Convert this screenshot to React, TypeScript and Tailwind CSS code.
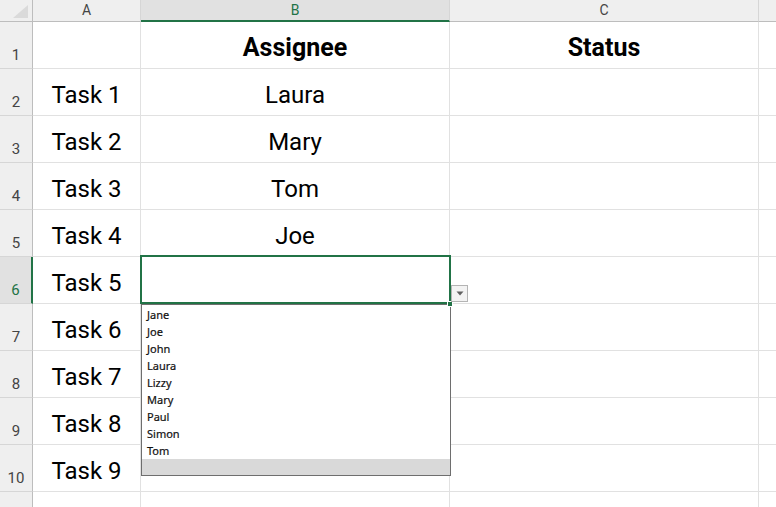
import React from "react";

type Row = { a: string; b: string; c: string; bold?: boolean };

const rows: Row[] = [
  { a: "", b: "Assignee", c: "Status", bold: true },
  { a: "Task 1", b: "Laura", c: "" },
  { a: "Task 2", b: "Mary", c: "" },
  { a: "Task 3", b: "Tom", c: "" },
  { a: "Task 4", b: "Joe", c: "" },
  { a: "Task 5", b: "", c: "" },
  { a: "Task 6", b: "", c: "" },
  { a: "Task 7", b: "", c: "" },
  { a: "Task 8", b: "", c: "" },
  { a: "Task 9", b: "", c: "" },
  { a: "", b: "", c: "" },
];

const names = ["Jane", "Joe", "John", "Laura", "Lizzy", "Mary", "Paul", "Simon", "Tom"];

function Dropdown() {
  return (
    <>
      <div className="absolute -left-px -top-[2px] w-[311px] h-[49px] border-2 border-[#217346] pointer-events-none z-10" />
      <div className="absolute left-[306px] top-[44px] w-[6px] h-[6px] bg-[#217346] border border-white z-20" />
      <div className="absolute left-[310px] top-[28px] w-[17px] h-[17px] border border-[#b4b4b4] bg-[#f3f3f3] flex items-center justify-center z-20">
        <svg width="8" height="5" viewBox="0 0 8 5">
          <polygon points="0.5,0.5 7.5,0.5 4,4.5" fill="#606060" />
        </svg>
      </div>
      <div className="absolute left-0 top-[47px] w-[310px] h-[172px] border border-[#6e6e6e] bg-white z-10 flex flex-col pt-px">
        {names.map((n) => (
          <div
            key={n}
            className="h-[17px] flex items-center pl-[5px] text-[11px] text-[#111] leading-none [-webkit-text-stroke:0.2px_#111]"
            style={{ fontFamily: '"Noto Sans", "Liberation Sans", sans-serif' }}
          >
            {n}
          </div>
        ))}
        <div className="flex-1 bg-[#d9d9d9]" />
      </div>
    </>
  );
}

export default function App() {
  return (
    <div className="w-[776px] h-[507px] overflow-hidden bg-white">
      <div
        className="grid grid-cols-[33px_108px_309px_309px_1fr] grid-rows-[22px_repeat(11,47px)]"
        style={{ fontFamily: 'Roboto, "Liberation Sans", sans-serif' }}
      >
        {/* header row */}
        <div className="bg-[#efefef] border-r border-b border-[#bdbdbd] relative">
          <svg className="absolute left-[13px] top-[5px]" width="15" height="13" viewBox="0 0 15 13">
            <polygon points="15,0 15,13 0,13" fill="#dadada" />
          </svg>
        </div>
        <div className="bg-[#efefef] border-r border-[#d6d6d6] border-b border-b-[#bdbdbd] flex items-center justify-center text-[14px] text-[#444]">
          A
        </div>
        <div className="bg-[#e1e1e1] border-r border-[#d6d6d6] border-b-2 border-b-[#217346] flex items-center justify-center text-[14px] text-[#217346]">
          B
        </div>
        <div className="bg-[#efefef] border-r border-[#d6d6d6] border-b border-b-[#bdbdbd] flex items-center justify-center text-[14px] text-[#444]">
          C
        </div>
        <div className="bg-[#efefef] border-b border-[#bdbdbd]" />

        {rows.map((r, i) => {
          const sel = i === 5;
          return (
            <React.Fragment key={i}>
              <div
                className={
                  sel
                    ? "bg-[#e1e1e1] border-r-2 border-r-[#217346] border-b border-b-[#d6d6d6] flex items-end justify-center pb-[5px] text-[15px] leading-none text-[#217346]"
                    : "bg-[#efefef] border-r border-r-[#bdbdbd] border-b border-b-[#d6d6d6] flex items-end justify-center pb-[5px] text-[15px] leading-none text-[#444]"
                }
              >
                {i < 10 ? i + 1 : ""}
              </div>
              <div className="border-r border-b border-[#e1e1e1] flex items-center justify-center pt-[6px] text-[24px] text-black">
                {r.a}
              </div>
              <div
                className={
                  "relative border-r border-b border-[#e1e1e1] flex items-center justify-center pt-[5px] text-black " +
                  (r.bold ? "text-[25px] font-bold" : "text-[24px]")
                }
              >
                {r.b}
                {sel && <Dropdown />}
              </div>
              <div
                className={
                  "border-r border-b border-[#e1e1e1] flex items-center justify-center pt-[5px] text-black " +
                  (r.bold ? "text-[25px] font-bold" : "text-[24px]")
                }
              >
                {r.c}
              </div>
              <div className="border-b border-[#e1e1e1]" />
            </React.Fragment>
          );
        })}
      </div>
    </div>
  );
}
